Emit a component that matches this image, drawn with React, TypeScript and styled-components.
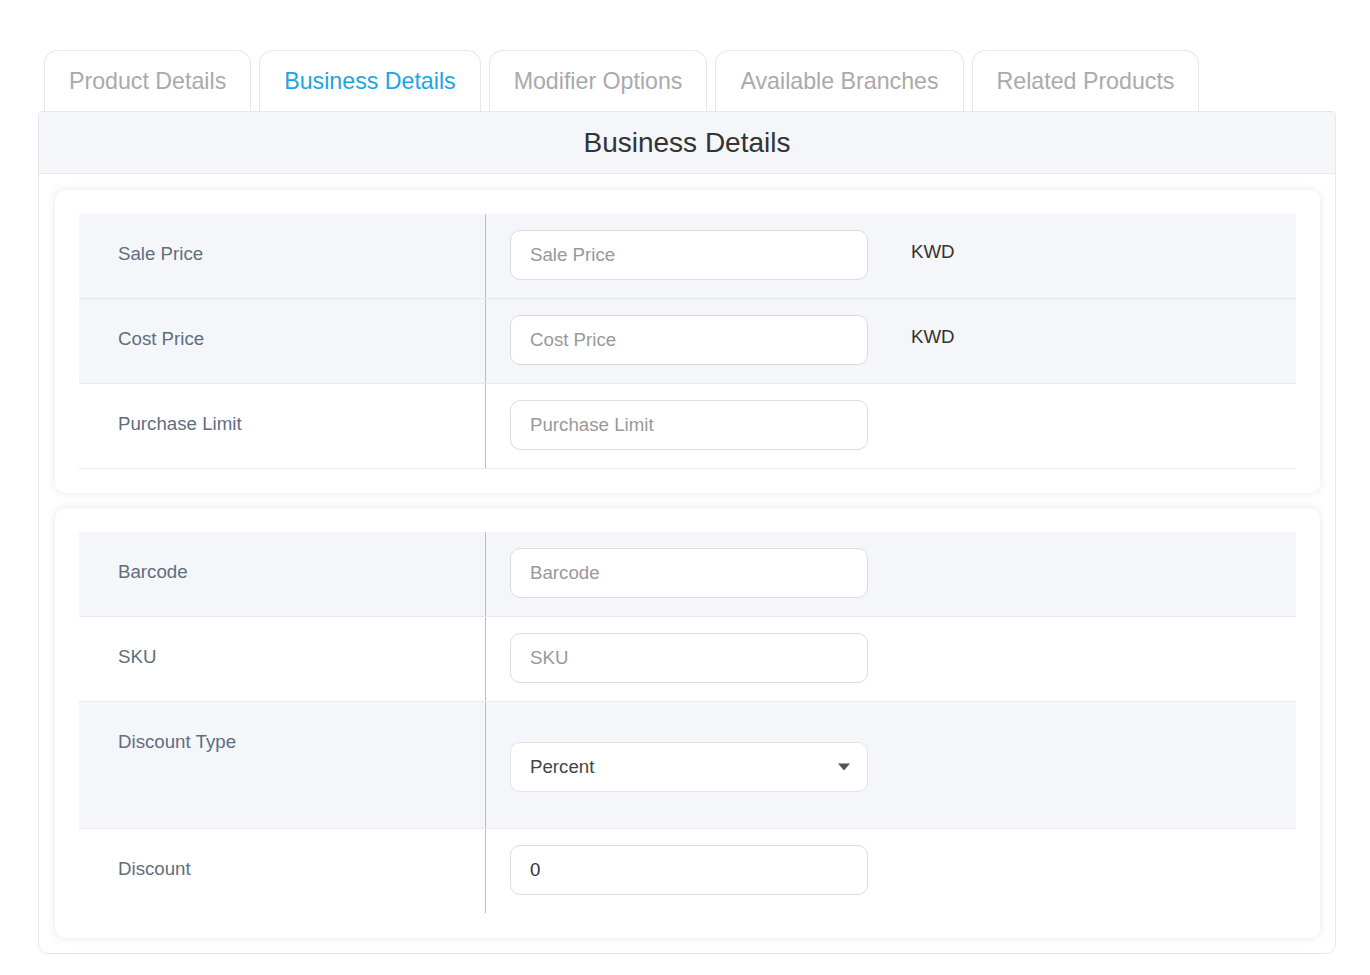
import React from "react";
import styled, { createGlobalStyle } from "styled-components";

const GlobalStyle = createGlobalStyle`
  html, body {
    margin: 0;
    padding: 0;
    background: #ffffff;
    font-family: "Liberation Sans", Arial, sans-serif;
  }
  * {
    box-sizing: border-box;
  }
`;

type Field = {
  label: string;
  placeholder?: string;
  value?: string;
  unit?: string;
  select?: boolean;
  shaded?: boolean;
  tall?: boolean;
};

const tabs = [
  "Product Details",
  "Business Details",
  "Modifier Options",
  "Available Branches",
  "Related Products",
];

const priceFields: Field[] = [
  { label: "Sale Price", placeholder: "Sale Price", unit: "KWD", shaded: true },
  { label: "Cost Price", placeholder: "Cost Price", unit: "KWD", shaded: true },
  { label: "Purchase Limit", placeholder: "Purchase Limit" },
];

const stockFields: Field[] = [
  { label: "Barcode", placeholder: "Barcode", shaded: true },
  { label: "SKU", placeholder: "SKU" },
  { label: "Discount Type", value: "Percent", select: true, shaded: true, tall: true },
  { label: "Discount", value: "0" },
];

const CaretDown = () => (
  <svg width="14" height="8" viewBox="0 0 14 8">
    <path d="M1 0.5 L13 0.5 L7 7.5 Z" fill="#555" />
  </svg>
);

const FieldRow = ({ field }: { field: Field }) => (
  <Row $shaded={field.shaded}>
    <LabelCell>{field.label}</LabelCell>
    <FieldCell $tall={field.tall}>
      {field.select ? (
        <SelectBox>
          <span>{field.value}</span>
          <CaretDown />
        </SelectBox>
      ) : (
        <TextInput
          placeholder={field.placeholder}
          defaultValue={field.value}
        />
      )}
      {field.unit && <Unit>{field.unit}</Unit>}
    </FieldCell>
  </Row>
);

const App = () => {
  return (
    <>
      <GlobalStyle />
      <Page>
        <TabBar>
          {tabs.map((tab) => (
            <Tab key={tab} $active={tab === "Business Details"}>
              {tab}
            </Tab>
          ))}
        </TabBar>
        <Panel>
          <PanelHeader>Business Details</PanelHeader>
          <PanelBody>
            <Card>
              <Table>
                {priceFields.map((f) => (
                  <FieldRow key={f.label} field={f} />
                ))}
              </Table>
            </Card>
            <Card>
              <Table $openEnd>
                {stockFields.map((f) => (
                  <FieldRow key={f.label} field={f} />
                ))}
              </Table>
            </Card>
          </PanelBody>
        </Panel>
      </Page>
    </>
  );
};

const Page = styled.div`
  padding: 50px 34px 20px 38px;
`;

const TabBar = styled.div`
  display: flex;
  gap: 8px;
  padding-left: 6px;
`;

const Tab = styled.div<{ $active?: boolean }>`
  height: 61px;
  padding: 0 24px;
  display: flex;
  align-items: center;
  border: 1px solid #e8e8e8;
  border-bottom: none;
  border-radius: 14px 14px 0 0;
  background: #ffffff;
  font-size: 23.2px;
  color: ${(p) => (p.$active ? "#1ea4e2" : "#aaaaaa")};
`;

const Panel = styled.div`
  border: 1px solid #e8e8e8;
  border-radius: 4px 4px 10px 10px;
`;

const PanelHeader = styled.div`
  height: 62px;
  background: #f5f6fa;
  border-bottom: 1px solid #e8e8ec;
  display: flex;
  align-items: center;
  justify-content: center;
  font-size: 28px;
  color: #333333;
`;

const PanelBody = styled.div`
  padding: 16px 15px 15px 16px;
  display: flex;
  flex-direction: column;
  gap: 15px;
`;

const Card = styled.div`
  background: #ffffff;
  border-radius: 10px;
  box-shadow: 0 0 8px rgba(0, 0, 0, 0.1);
  padding: 24px;
`;

const Row = styled.div<{ $shaded?: boolean }>`
  display: flex;
  background: ${(p) => (p.$shaded ? "#f5f6fa" : "#ffffff")};
  border-bottom: 1px solid #e8e9ee;
`;

const Table = styled.div<{ $openEnd?: boolean }>`
  display: flex;
  flex-direction: column;

  ${Row}:last-child {
    border-bottom-color: ${(p) => (p.$openEnd ? "transparent" : "#e8e9ee")};
  }
`;

const LabelCell = styled.div`
  width: 407px;
  flex-shrink: 0;
  border-right: 1px solid #bdbdbd;
  padding: 29px 0 0 39px;
  font-size: 18.7px;
  line-height: 22px;
  color: #5f6e7e;
`;

const FieldCell = styled.div<{ $tall?: boolean }>`
  flex: 1;
  display: flex;
  align-items: center;
  gap: 43px;
  padding: ${(p) => (p.$tall ? "40px 24px 36px" : "16px 24px 18px")};
`;

const TextInput = styled.input`
  width: 358px;
  height: 50px;
  border: 1px solid #dcdcdc;
  border-radius: 10px;
  background: #ffffff;
  padding: 0 19px;
  font-family: "Liberation Sans", Arial, sans-serif;
  font-size: 18.7px;
  color: #333333;
  outline: none;

  &::placeholder {
    color: #999999;
  }
`;

const SelectBox = styled.div`
  width: 358px;
  height: 50px;
  border: 1px solid #e4e4e4;
  border-radius: 10px;
  background: #ffffff;
  padding: 0 16px 0 19px;
  display: flex;
  align-items: center;
  justify-content: space-between;
  font-size: 18.7px;
  color: #444444;
`;

const Unit = styled.span`
  font-size: 18.7px;
  color: #333333;
  margin-bottom: 6px;
`;

export default App;
